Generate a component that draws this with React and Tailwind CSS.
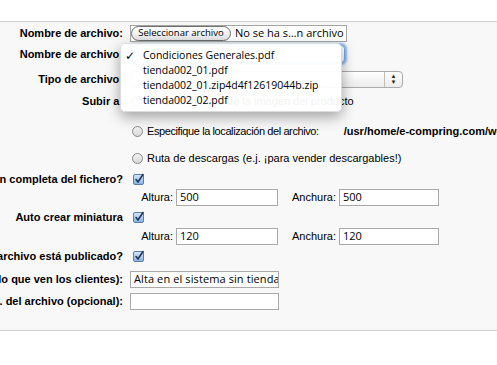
import React from "react";

const sans = "font-['Liberation_Sans',Arial,sans-serif]";
const ui = "font-['Open_Sans','DejaVu_Sans',sans-serif]";

const Label = ({ children, className = "" }) => (
  <div className={`w-[123px] shrink-0 flex justify-end whitespace-nowrap font-bold text-[11px] ${className}`}>
    {children}
  </div>
);

const Check = () => (
  <svg width="12" height="12" viewBox="0 0 12 12" className="shrink-0">
    <defs>
      <linearGradient id="cb" x1="0" y1="0" x2="0" y2="1">
        <stop offset="0" stopColor="#d7e7f8" />
        <stop offset="1" stopColor="#86b1e2" />
      </linearGradient>
    </defs>
    <rect x="0.5" y="1.5" width="10" height="10" rx="1.5" fill="url(#cb)" stroke="#5b7fa8" />
    <path d="M3 6.5 L5 9 L10 1.5" fill="none" stroke="#1d3557" strokeWidth="1.6" strokeLinecap="round" />
  </svg>
);

const Radio = () => (
  <svg width="11" height="11" viewBox="0 0 11 11" className="shrink-0">
    <defs>
      <linearGradient id="rb" x1="0" y1="0" x2="0" y2="1">
        <stop offset="0" stopColor="#f4f4f4" />
        <stop offset="1" stopColor="#d6d6d6" />
      </linearGradient>
    </defs>
    <circle cx="5.5" cy="5.5" r="5" fill="url(#rb)" stroke="#8a8a8a" />
  </svg>
);

const Field = ({ value = "", className = "" }) => (
  <div
    className={`h-[17px] border border-[#a9a9a9] bg-white flex items-center px-[3px] overflow-hidden whitespace-nowrap text-[11px] ${ui} ${className}`}
  >
    {value}
  </div>
);

const SizeRow = ({ h, w }) => (
  <div className="h-[18px] flex items-center text-[11px]">
    <div className="w-[173px] shrink-0 flex justify-end">Altura:</div>
    <Field value={h} className="ml-[3px] w-[102px]" />
    <div className="w-[58px] shrink-0 flex justify-end">Anchura:</div>
    <Field value={w} className="ml-[3px] w-[100px]" />
  </div>
);

export default function App() {
  return (
    <div className={`relative w-[497px] h-[365px] overflow-hidden bg-white text-black ${sans}`}>
      <div className="h-[21px]" />
      <div className="border-y border-[#d2d2d2] bg-[#f8f8f8] pb-[20px]">
        <div className="mt-[2px] h-[18px] flex items-center gap-[7px]">
          <Label>Nombre de archivo:</Label>
          <div className={`h-[17px] w-[217px] border border-[#a5a5a5] bg-white flex items-center text-[11px] ${ui}`}>
            <div className="h-[15px] w-[100px] rounded-full border border-[#6e6e6e] bg-gradient-to-b from-white to-[#e4e4e4] flex items-center justify-center text-[9.5px]">
              Seleccionar archivo
            </div>
            <span className="ml-[4px] whitespace-nowrap">No se ha s…n archivo</span>
          </div>
        </div>

        <div className="mt-[3px] h-[18px] flex items-center gap-[7px]">
          <Label>Nombre de archivo:</Label>
          <div className="h-[18px] w-[215px] rounded-[4px] border border-[#7aa7de] bg-white shadow-[0_0_2px_2px_#8fb9ec]" />
        </div>

        <div className="mt-[7px] h-[18px] flex items-center gap-[7px]">
          <Label>Tipo de archivo:</Label>
          <div className="h-[17px] w-[273px] rounded-[4px] border border-[#aaaaaa] bg-gradient-to-b from-white to-[#ececec] flex justify-end">
            <div className="w-[18px] border-l border-[#bdbdbd] flex flex-col items-center justify-center leading-none text-[6px] text-[#222]">
              <span>▲</span>
              <span>▼</span>
            </div>
          </div>
        </div>

        <div className="mt-[4px] h-[18px] flex items-center gap-[8px]">
          <Label>Subir a:</Label>
          <Radio />
          <span className="text-[11px] whitespace-nowrap">Directorio base de la imagen del producto</span>
        </div>

        <div className="mt-[12px] h-[18px] flex items-center text-[11px] whitespace-nowrap">
          <div className="w-[132px] shrink-0" />
          <Radio />
          <span className="ml-[4px] tracking-[-0.4px]">Especifique la localización del archivo:</span>
          <span className="ml-[25px] font-bold">/usr/home/e-compring.com/web/components/com_virtuemart</span>
        </div>

        <div className="mt-[9px] h-[18px] flex items-center text-[11px] whitespace-nowrap">
          <div className="w-[132px] shrink-0" />
          <Radio />
          <span className="ml-[4px]">Ruta de descargas (e.j. ¡para vender descargables!)</span>
        </div>

        <div className="mt-[3px] h-[18px] flex items-center gap-[10px]">
          <Label>¿Redimensionar la imagen completa del fichero?</Label>
          <Check />
        </div>

        <SizeRow h="500" w="500" />

        <div className="mt-[2px] h-[18px] flex items-center gap-[10px]">
          <Label>Auto crear miniatura</Label>
          <Check />
        </div>

        <div className="mt-[1px]">
          <SizeRow h="120" w="120" />
        </div>

        <div className="mt-[2px] h-[18px] flex items-center gap-[10px]">
          <Label>¿El archivo está publicado?</Label>
          <Check />
        </div>

        <div className="mt-[5px] h-[18px] flex items-center gap-[7px]">
          <Label>Título del archivo (lo que ven los clientes):</Label>
          <Field value="Alta en el sistema sin tienda (demo)" className="w-[149px] tracking-[0.1px]" />
        </div>

        <div className="mt-[4px] h-[18px] flex items-center gap-[7px]">
          <Label>Dir. del archivo (opcional):</Label>
          <Field className="w-[149px]" />
        </div>
      </div>

      <div
        className={`absolute left-[120px] top-[43px] w-[222px] h-[69px] rounded-[5px] bg-white/95 border border-[#dcdcdc] shadow-[0_5px_14px_rgba(0,0,0,0.35)] pt-[4px] text-[10.5px] leading-[15px] ${ui}`}
      >
        <div className="flex">
          <span className="w-[22px] pl-[4px] text-[12px]">✓</span>
          <span>Condiciones Generales.pdf</span>
        </div>
        <div className="pl-[22px]">tienda002_01.pdf</div>
        <div className="pl-[22px]">tienda002_01.zip4d4f12619044b.zip</div>
        <div className="pl-[22px]">tienda002_02.pdf</div>
      </div>
    </div>
  );
}
